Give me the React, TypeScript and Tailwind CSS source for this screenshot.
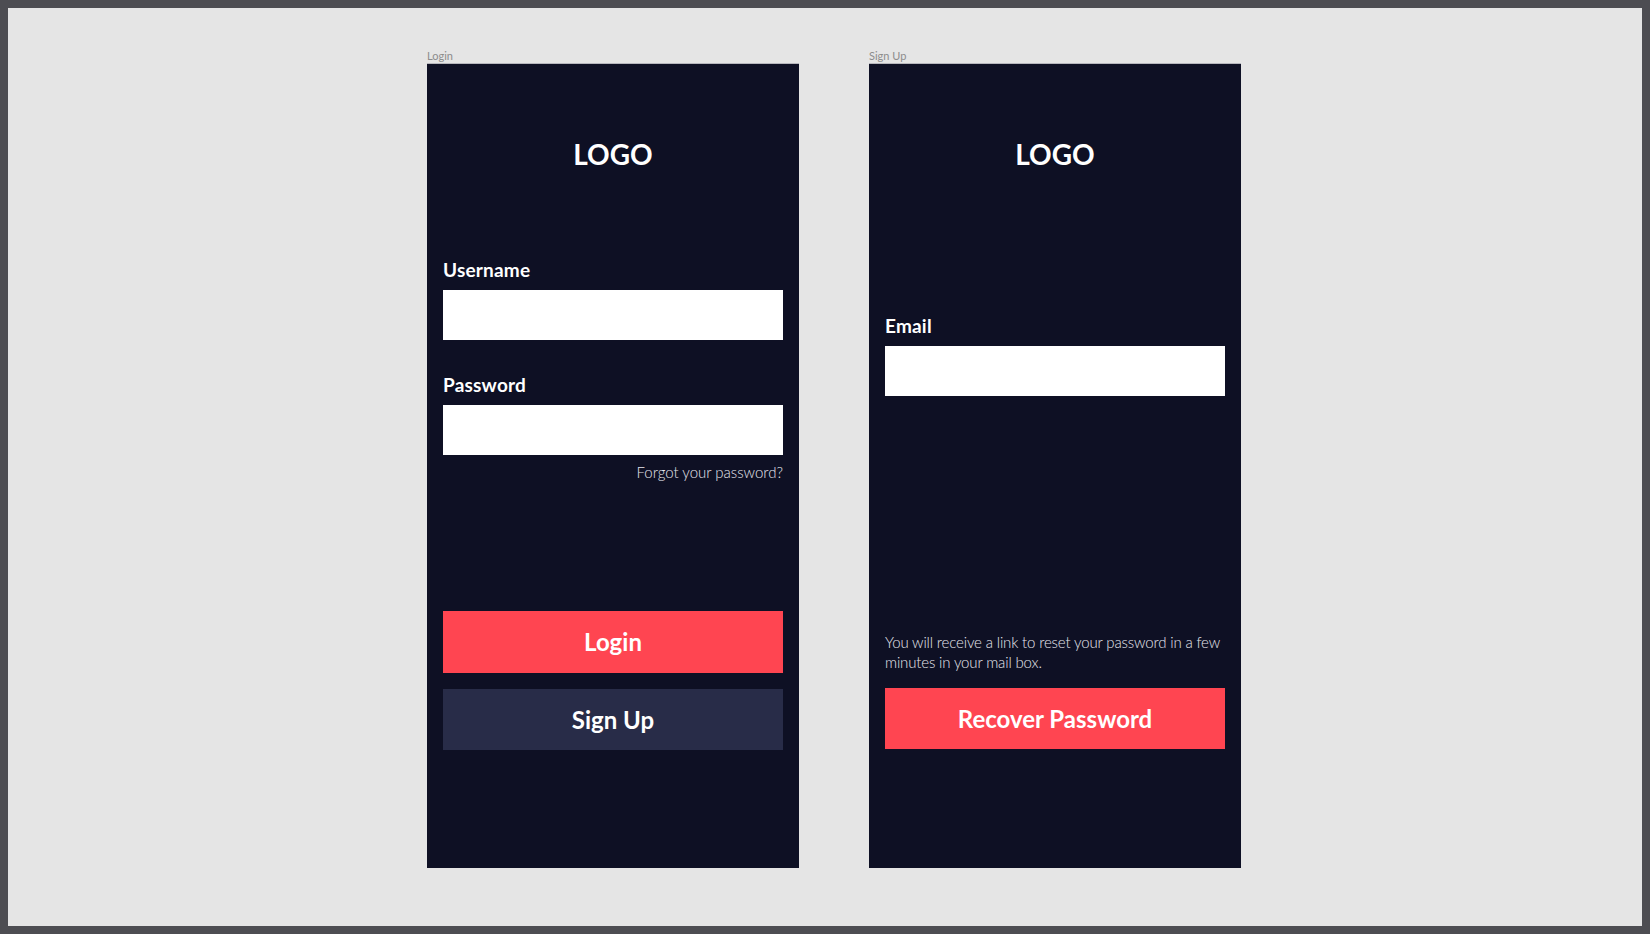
import type { ReactNode } from "react";

interface FrameProps {
  title: string;
  children: ReactNode;
}

function Frame({ title, children }: FrameProps) {
  return (
    <div className="w-[372px]">
      <p className="text-[11px] leading-[14px] text-[#8c8c8c]">{title}</p>
      <div className="flex h-[805px] flex-col border-t border-white/70 bg-[#0e1024] px-4 pt-[73px]">
        {children}
      </div>
    </div>
  );
}

function Logo() {
  return (
    <h1 className="text-center text-[28px] font-bold leading-[34px] text-white">LOGO</h1>
  );
}

function Field({ label, className = "" }: { label: string; className?: string }) {
  return (
    <div className={className}>
      <label className="block text-[19px] font-bold leading-[24px] tracking-[0.2px] text-white">
        {label}
      </label>
      <div className="mt-2 h-[50px] w-full bg-white" />
    </div>
  );
}

function Button({ label, tone, className = "" }: { label: string; tone: "red" | "navy"; className?: string }) {
  return (
    <button
      className={`${className} flex w-full items-center justify-center text-[24px] font-bold text-white ${
        tone === "red" ? "h-[62px] bg-[#ff4551]" : "h-[61px] bg-[#282c48]"
      }`}
    >
      {label}
    </button>
  );
}

export default function App() {
  return (
    <div className="h-[934px] border-8 border-[#4d4d52] bg-[#e5e5e5] font-['Lato',sans-serif]">
      <div className="flex gap-[70px] pl-[419px] pt-[41px]">
        <Frame title="Login">
          <Logo />
          <Field label="Username" className="mt-[87px]" />
          <Field label="Password" className="mt-[33px]" />
          <p className="mt-[7px] text-right text-[15px] font-light leading-[20px] text-[#e6e6ee]">
            Forgot your password?
          </p>
          <Button label="Login" tone="red" className="mt-[129px]" />
          <Button label="Sign Up" tone="navy" className="mt-4" />
        </Frame>

        <Frame title="Sign Up">
          <Logo />
          <Field label="Email" className="mt-[143px]" />
          <p className="mt-[236px] text-[15px] font-light leading-[20px] tracking-[-0.15px] text-[#e6e6ee]">
            You will receive a link to reset your password in a few minutes in your mail box.
          </p>
          <Button label="Recover Password" tone="red" className="mt-4 !h-[61px]" />
        </Frame>
      </div>
    </div>
  );
}
